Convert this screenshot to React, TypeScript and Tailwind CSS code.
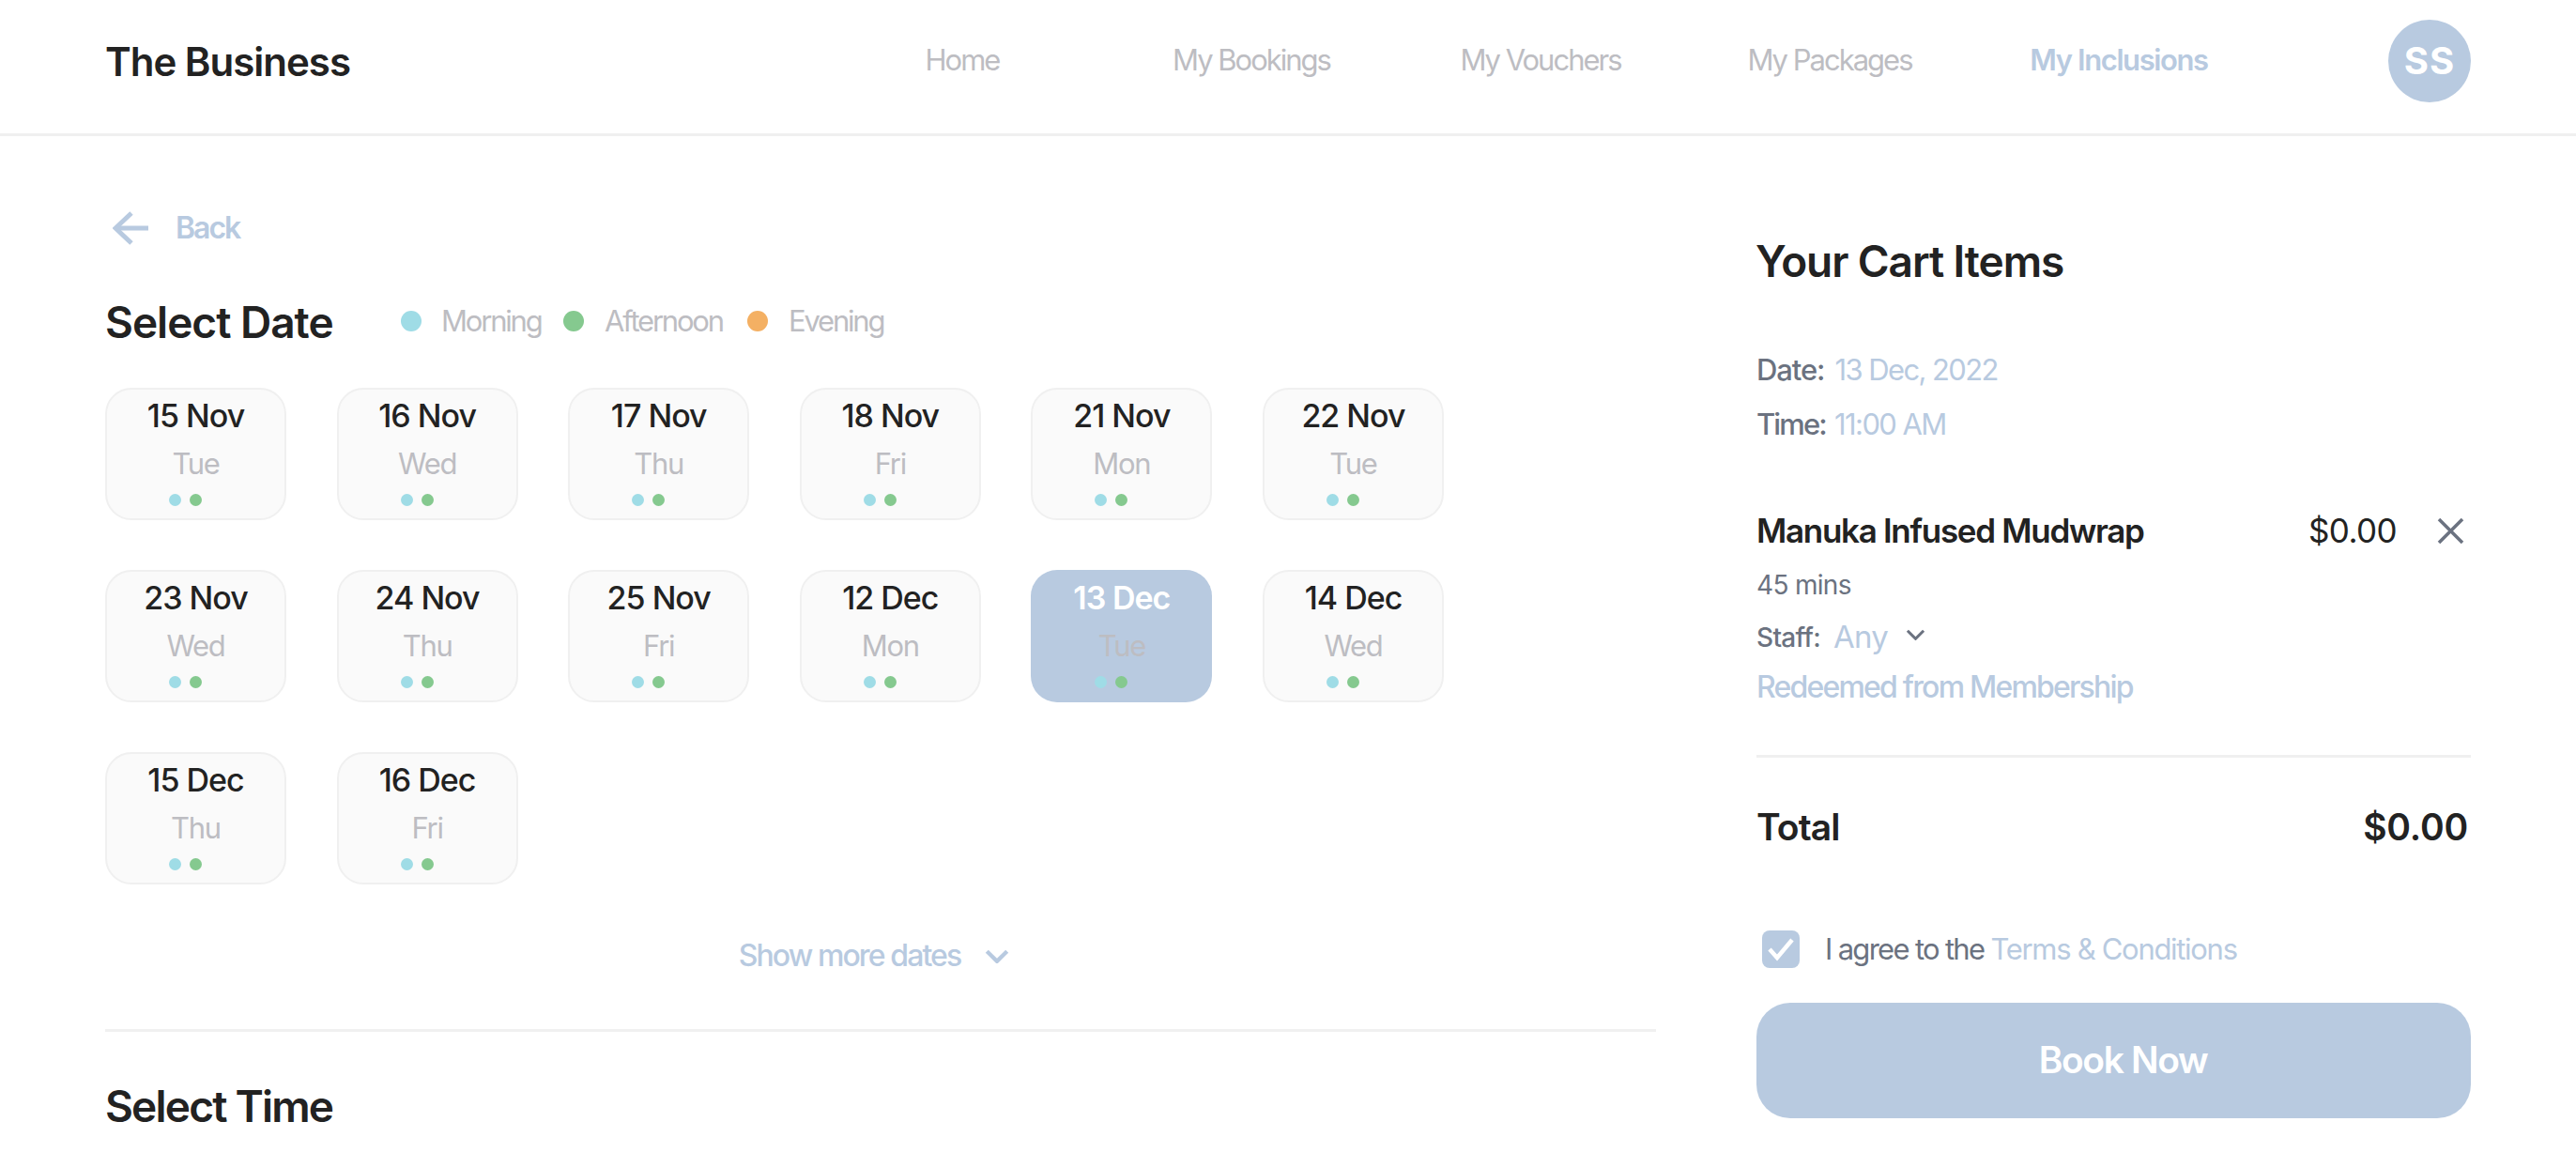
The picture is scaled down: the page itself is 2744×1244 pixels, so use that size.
import React from "react";

const rows = [
  ["15 Nov", "Tue"], ["16 Nov", "Wed"], ["17 Nov", "Thu"], ["18 Nov", "Fri"], ["21 Nov", "Mon"], ["22 Nov", "Tue"],
  ["23 Nov", "Wed"], ["24 Nov", "Thu"], ["25 Nov", "Fri"], ["12 Dec", "Mon"], ["13 Dec", "Tue"], ["14 Dec", "Wed"],
  ["15 Dec", "Thu"], ["16 Dec", "Fri"],
];

function DateCard({ date, day }: { date: string; day: string }) {
  const active = date === "13 Dec";
  return (
    <div
      className={
        active
          ? "w-[193px] h-[141px] box-border rounded-[28px] bg-[#b8cae0] flex flex-col items-center"
          : "w-[193px] h-[141px] box-border rounded-[28px] bg-[#fafafa] border-2 border-[#f0f0f0] flex flex-col items-center"
      }
    >
      <div
        className={
          active
            ? "mt-[7px] h-[46px] leading-[46px] text-[34px] font-semibold tracking-[-1px] text-white"
            : "mt-[5px] h-[46px] leading-[46px] text-[34px] font-medium tracking-[-1px] text-[#222222]"
        }
      >
        {date}
      </div>
      <div className="mt-[6px] h-[44px] leading-[44px] text-[31px] tracking-[-1.3px] text-[#bdbdc2]">{day}</div>
      <div className="mt-[10px] flex gap-[9px]">
        <span className="w-[13px] h-[13px] rounded-full bg-[#9fdce6]" />
        <span className="w-[13px] h-[13px] rounded-full bg-[#85c98f]" />
        <span className="w-[13px] h-[13px] rounded-full bg-transparent" />
      </div>
    </div>
  );
}

function Chevron({ className, sw = 3 }: { className: string; sw?: number }) {
  return (
    <svg className={className} viewBox="0 0 24 14" fill="none" stroke="currentColor" strokeWidth={sw}>
      <polyline points="2,2 12,12 22,2" />
    </svg>
  );
}

export default function App() {
  return (
    <div className="w-[2744px] h-[1244px] overflow-hidden bg-white text-[#222222] font-['Inter','Noto_Sans',sans-serif]">
      <header className="h-[145px] box-border border-b-[3px] border-[#f0f0f0] pl-[112px] pr-[112px] flex items-center">
        <div className="w-[759px] text-[42px] leading-[56px] font-semibold tracking-[-1px] text-[#222222] -mt-[10px]">The Business</div>
        <nav className="flex text-[31px] leading-[44px] tracking-[-2px] text-[#bdbdc2] -mt-[14px]">
          {["Home", "My Bookings", "My Vouchers", "My Packages"].map((n) => (
            <div key={n} className="w-[308px] text-center">{n}</div>
          ))}
          <div className="w-[308px] text-center font-semibold text-[#b8cae0] tracking-[-1.4px]">My Inclusions</div>
        </nav>
        <div className="ml-auto w-[88px] h-[88px] rounded-full bg-[#b8cae0] text-white flex items-center justify-center text-[40px] font-bold tracking-[1px] -mt-[13px]">
          SS
        </div>
      </header>

      <main className="flex pl-[112px] pr-[112px]">
        <section className="w-[1652px] pt-[78px]">
          <div className="h-[40px] flex items-center text-[#b8cae0]">
            <svg className="ml-[8px] w-[40px] h-[36px]" viewBox="0 0 40 36" fill="none" stroke="currentColor" strokeWidth="5">
              <polyline points="20,2 3,18 20,34" />
              <line x1="3" y1="18" x2="38" y2="18" />
            </svg>
            <span className="ml-[27px] text-[32px] leading-[40px] font-semibold tracking-[-2px]">Back</span>
          </div>

          <div className="mt-[52px] h-[56px] flex items-center">
            <h2 className="w-[315px] text-[46px] leading-[56px] font-semibold tracking-[-1px]">Select Date</h2>
            <div className="flex items-center text-[31px] tracking-[-2.2px] text-[#bdbdc2] -mt-[2px]">
              <span className="w-[22px] h-[22px] rounded-full bg-[#9fdce6]" />
              <span className="ml-[21px] w-[130px]">Morning</span>
              <span className="w-[22px] h-[22px] rounded-full bg-[#85c98f]" />
              <span className="ml-[22px] w-[152px]">Afternoon</span>
              <span className="w-[22px] h-[22px] rounded-full bg-[#f4b063]" />
              <span className="ml-[22px]">Evening</span>
            </div>
          </div>

          <div className="mt-[42px] grid grid-cols-[repeat(6,193px)] gap-x-[53.6px] gap-y-[53px]">
            {rows.map(([d, w]) => (
              <DateCard key={d} date={d} day={w} />
            ))}
          </div>

          <div className="mt-[56px] h-[40px] flex items-center justify-center pr-[14px] text-[#b8cae0]">
            <span className="text-[32px] leading-[40px] font-medium tracking-[-1.9px]">Show more dates</span>
            <Chevron className="ml-[26px] w-[26px] h-[15px]" sw={4} />
          </div>

          <div className="mt-[58px] h-[3px] bg-[#f0f0f0]" />

          <h2 className="mt-[51px] text-[46px] leading-[56px] font-semibold tracking-[-1.8px]">Select Time</h2>
        </section>

        <aside className="ml-[107px] w-[761px] pt-[105px]">
          <h2 className="text-[46px] leading-[56px] font-semibold tracking-[-1.1px] -ml-[1px]">Your Cart Items</h2>

          <div className="mt-[68px] h-[40px] leading-[40px] text-[31px] font-medium tracking-[-1.1px] text-[#6b7280]">
            Date: <span className="ml-[4px] font-normal tracking-[-1.6px] text-[#b8cae0]">13 Dec, 2022</span>
          </div>
          <div className="mt-[18px] h-[40px] leading-[40px] text-[31px] font-medium tracking-[-1.9px] text-[#6b7280]">
            Time: <span className="ml-[3px] font-normal tracking-[-1.6px] text-[#b8cae0]">11:00 AM</span>
          </div>

          <div className="mt-[71px] h-[44px] flex items-center text-[35px] leading-[44px]">
            <span className="font-semibold tracking-[-1.3px]">Manuka Infused Mudwrap</span>
            <span className="ml-auto tracking-[-0.6px]">$0.00</span>
            <svg className="ml-[43px] mr-[7px] w-[29px] h-[29px] text-[#6b7280]" viewBox="0 0 29 29" fill="none" stroke="currentColor" strokeWidth="3.5">
              <line x1="2" y1="2" x2="27" y2="27" />
              <line x1="27" y1="2" x2="2" y2="27" />
            </svg>
          </div>

          <div className="mt-[18px] h-[36px] leading-[36px] text-[28px] tracking-[-0.7px] text-[#6b7280]">45 mins</div>

          <div className="mt-[18px] h-[40px] flex items-center text-[#6b7280]">
            <span className="text-[28px] tracking-[-0.7px] font-medium">Staff:</span>
            <span className="ml-[14px] text-[33px] tracking-[-0.8px] text-[#b8cae0]">Any</span>
            <Chevron className="ml-[19px] w-[21px] h-[12px] -mt-[6px] text-[#6b7280]" sw={3.5} />
          </div>

          <div className="mt-[13px] h-[40px] leading-[40px] text-[32px] font-medium tracking-[-1.8px] text-[#b8cae0]">
            Redeemed from Membership
          </div>

          <div className="mt-[52px] h-[3px] bg-[#f0f0f0]" />

          <div className="mt-[50px] h-[48px] flex items-center justify-between text-[39px] leading-[48px] font-semibold">
            <span className="tracking-[-0.9px]">Total</span>
            <span className="tracking-[-0.2px] mr-[3px]">$0.00</span>
          </div>

          <div className="mt-[86px] h-[40px] flex items-center">
            <div className="ml-[6px] w-[40px] h-[40px] rounded-[8px] bg-[#b8cae0] flex items-center justify-center">
              <svg className="w-[30px] h-[26px]" viewBox="0 0 30 26" fill="none" stroke="white" strokeWidth="4.5">
                <polyline points="3,13 11,22 27,3" />
              </svg>
            </div>
            <span className="ml-[27px] text-[31px] tracking-[-1.7px] text-[#6b7280]">
              I agree to the <span className="tracking-[-1.3px] text-[#b8cae0]">Terms &amp; Conditions</span>
            </span>
          </div>

          <button className="mt-[37px] w-full h-[123px] rounded-[36px] bg-[#b8cae0] text-white text-[39px] font-semibold tracking-[-1.4px] pl-[20px]">
            Book Now
          </button>
        </aside>
      </main>
    </div>
  );
}
